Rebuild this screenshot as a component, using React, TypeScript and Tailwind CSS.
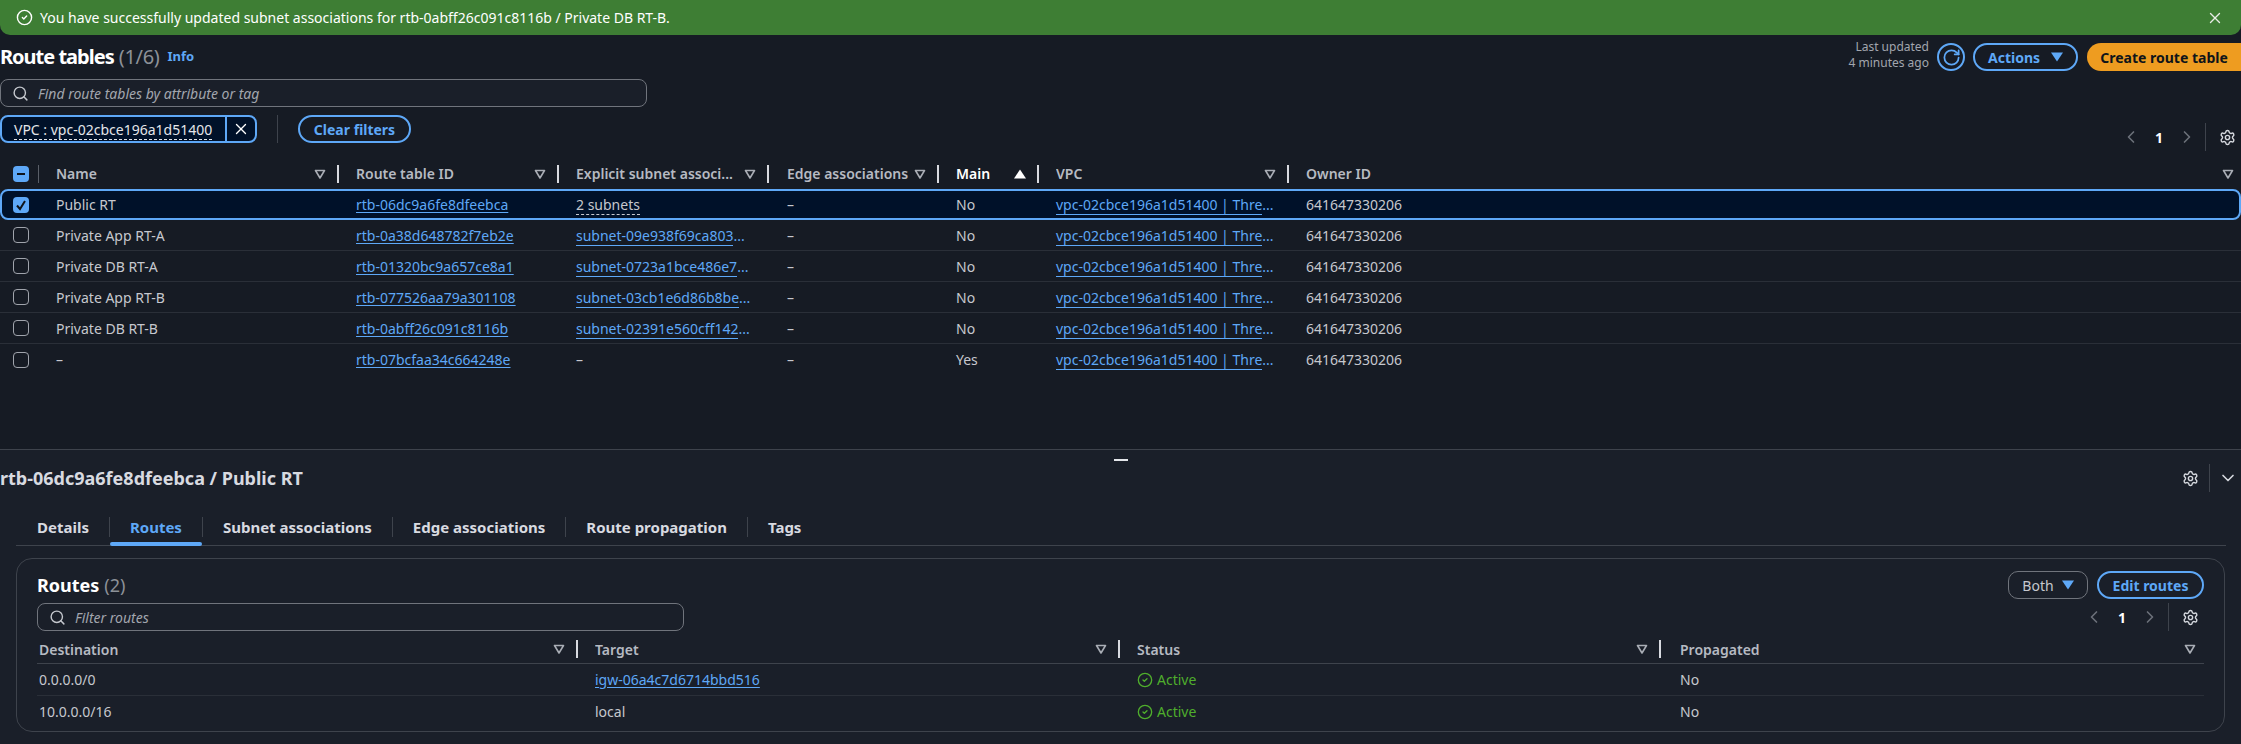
import { ChevronDown, ChevronLeft, ChevronRight, CircleCheck, RotateCw, Search, Settings, X } from "lucide-react";

const font = "[font-family:'Noto_Sans',sans-serif]";

const tableCols = "grid-cols-[39px_301px_220px_210px_170px_100px_250px_1fr]";
const routeCols = "grid-cols-[542px_542px_541px_1fr]";

const routeTables = [
  { name: "Public RT", id: "rtb-06dc9a6fe8dfeebca", subnet: "2 subnets", main: "No", selected: true },
  { name: "Private App RT-A", id: "rtb-0a38d648782f7eb2e", subnet: "subnet-09e938f69ca803", main: "No" },
  { name: "Private DB RT-A", id: "rtb-01320bc9a657ce8a1", subnet: "subnet-0723a1bce486e7", main: "No" },
  { name: "Private App RT-B", id: "rtb-077526aa79a301108", subnet: "subnet-03cb1e6d86b8be", main: "No" },
  { name: "Private DB RT-B", id: "rtb-0abff26c091c8116b", subnet: "subnet-02391e560cff142", main: "No" },
  { name: "–", id: "rtb-07bcfaa34c664248e", subnet: "–", main: "Yes" },
];

const tabs = ["Details", "Routes", "Subnet associations", "Edge associations", "Route propagation", "Tags"];

function FilterIcon() {
  return (
    <svg width="12" height="12" viewBox="0 0 12 12" className="shrink-0">
      <path d="M1.5 2.5h9L6 10z" fill="none" stroke="#a9adb5" strokeWidth="1.6" strokeLinejoin="round" />
    </svg>
  );
}

function Caret({ up, color }: { up?: boolean; color: string }) {
  return (
    <svg width="12" height="10" viewBox="0 0 12 10" className="shrink-0">
      <path d={up ? "M6 0.5 12 9.5H0z" : "M0 0.5h12L6 9.5z"} fill={color} />
    </svg>
  );
}

function HeaderCell({ label, active, tail, pl }: { label: string; active?: boolean; tail?: string; pl: string }) {
  return (
    <div className={`flex h-full items-center ${pl}`}>
      <span className={`flex-1 truncate text-[14px] font-semibold ${active ? "text-white" : "text-[#b6bac2]"}`}>{label}</span>
      {active ? <Caret up color="#ffffff" /> : <FilterIcon />}
      {tail ? <span className={tail} /> : <span className="ml-[11px] mr-px h-[18px] w-[2px] shrink-0 bg-[#d8dae0]" />}
    </div>
  );
}

function Pager() {
  return (
    <div className="flex items-center">
      <ChevronLeft size={20} strokeWidth={2} className="text-[#6b7079]" />
      <span className="mx-[14px] w-[8px] text-center text-[14px] font-bold text-white">1</span>
      <ChevronRight size={20} strokeWidth={2} className="text-[#6b7079]" />
      <span className="ml-[8px] h-[28px] w-px bg-[#3e434c]" />
      <Settings size={17} strokeWidth={2} className="ml-[13px] text-[#d5d8de]" />
    </div>
  );
}

function Checkbox({ state }: { state?: "on" | "some" }) {
  if (state) {
    return (
      <span className="flex h-[16px] w-[16px] items-center justify-center rounded-[4px] bg-[#5ea8f7]">
        <svg width="12" height="12" viewBox="0 0 12 12">
          {state === "on" ? (
            <path d="M2 6.5 5 10l5-8" fill="none" stroke="#0f141a" strokeWidth="2" />
          ) : (
            <path d="M2 6h8" stroke="#0f141a" strokeWidth="2" />
          )}
        </svg>
      </span>
    );
  }
  return <span className="h-[16px] w-[16px] rounded-[4px] border border-[#a0a4ac]" />;
}

function SearchBox({ placeholder, width }: { placeholder: string; width: string }) {
  return (
    <div className={`flex h-[28px] items-center rounded-[8px] border border-[#70747c] bg-[#1a1f29] pl-[11px] ${width}`}>
      <Search size={17} strokeWidth={2} className="text-[#c4c7cd]" />
      <span className="ml-[9px] text-[14px] italic text-[#a2a6ae]">{placeholder}</span>
    </div>
  );
}

function ActiveStatus() {
  return (
    <span className="flex items-center gap-[4px] text-[14px] text-[#4fae2c]">
      <CircleCheck size={16} strokeWidth={2} />
      Active
    </span>
  );
}

export default function App() {
  return (
    <div className={`flex h-[744px] w-[2241px] flex-col overflow-hidden bg-[#161b24] text-[#c6c8ce] ${font}`}>
      <div className="flex h-[35px] shrink-0 items-center rounded-b-[10px] bg-[#3e7e34] pl-[16px] pr-[17px] text-[14px] text-white">
        <CircleCheck size={17} strokeWidth={2} />
        <span className="ml-[7px] flex-1">You have successfully updated subnet associations for rtb-0abff26c091c8116b / Private DB RT-B.</span>
        <X size={18} strokeWidth={1.8} className="text-[#e8ece6]" />
      </div>

      <section className="h-[415px] shrink-0 border-b border-[#3e434c]">
        <div className="flex h-[36px] items-end">
          <div className="flex h-[28px] flex-1 items-center">
            <h1 className="text-[20px] font-bold tracking-[-1px] text-white">Route tables</h1>
            <span className="ml-[5px] text-[20px] tracking-[-0.3px] text-[#8d9198]">(1/6)</span>
            <span className="ml-[8px] text-[13px] font-bold text-[#5ea8f7]">Info</span>
          </div>
          <div className="mr-[8px] text-right text-[12px] leading-[16px] text-[#a2a6ae]">
            <div>Last updated</div>
            <div>4 minutes ago</div>
          </div>
          <button className="flex h-[28px] w-[28px] items-center justify-center rounded-full border-2 border-[#5ea8f7] text-[#5ea8f7]">
            <RotateCw size={19} strokeWidth={2.2} />
          </button>
          <button className="ml-[8px] flex h-[28px] w-[105px] items-center justify-center gap-[11px] rounded-full border-2 border-[#5ea8f7] text-[14px] font-bold text-[#5ea8f7]">
            Actions
            <Caret color="#5ea8f7" />
          </button>
          <button className="ml-[9px] h-[28px] w-[154px] rounded-l-full rounded-r-[14px] bg-[#ee9c20] text-[14px] font-bold text-[#0f141a]">
            Create route table
          </button>
        </div>

        <div className="mt-[8px]">
          <SearchBox placeholder="Find route tables by attribute or tag" width="w-[647px]" />
        </div>

        <div className="flex h-[44px] items-start">
          <div className="mt-[8px] flex h-[28px] w-[257px] items-center rounded-[8px] border-2 border-[#5ea8f7] bg-[#001129]">
            <span className="ml-[12px] flex-1 text-[14px] text-[#e4e6ea]">
              <span className="border-b border-dashed border-[#e4e6ea]">VPC : vpc-02cbce196a1d51400</span>
            </span>
            <span className="flex h-full w-[30px] items-center justify-center border-l-2 border-[#5ea8f7] text-white">
              <X size={18} strokeWidth={1.8} />
            </span>
          </div>
          <span className="ml-[20px] mt-[8px] h-[28px] w-px bg-[#3e434c]" />
          <button className="ml-[20px] mt-[8px] h-[28px] w-[113px] rounded-full border-2 border-[#5ea8f7] text-[14px] font-bold text-[#5ea8f7]">
            Clear filters
          </button>
          <div className="ml-auto mr-[5px] mt-[16px] flex h-[28px] items-center">
            <Pager />
          </div>
        </div>

        <div className={`mt-[7px] grid h-[31px] items-center ${tableCols}`}>
          <div className="flex h-full items-center pl-[13px]">
            <Checkbox state="some" />
            <span className="ml-[9px] h-[18px] w-px bg-[#5a5f68]" />
          </div>
          <HeaderCell label="Name" pl="pl-[17px]" />
          <HeaderCell label="Route table ID" pl="pl-[16px]" />
          <HeaderCell label="Explicit subnet associ..." pl="pl-[16px]" />
          <HeaderCell label="Edge associations" pl="pl-[17px]" />
          <HeaderCell label="Main" active pl="pl-[16px]" />
          <HeaderCell label="VPC" pl="pl-[16px]" />
          <HeaderCell label="Owner ID" tail="w-[7px]" pl="pl-[16px]" />
        </div>

        {routeTables.map((row) => (
          <div
            key={row.id}
            className={`grid h-[31px] items-center text-[14px] ${tableCols} ${
              row.selected ? "rounded-[8px] bg-[#001129] outline-2 -outline-offset-2 outline-[#5ea8f7]" : "border-b border-[#2a2f38] last:border-b-0"
            }`}
          >
            <div className="flex pl-[13px]">
              <Checkbox state={row.selected ? "on" : undefined} />
            </div>
            <div className="pl-[17px]">{row.name}</div>
            <div className="pl-[16px]">
              <a className="text-[#5ea8f7] underline underline-offset-2">{row.id}</a>
            </div>
            <div className="pl-[16px]">
              {row.selected ? (
                <span className="border-b border-dashed border-[#c6c8ce]">{row.subnet}</span>
              ) : row.subnet === "–" ? (
                row.subnet
              ) : (
                <span className="text-[#5ea8f7]">
                  <a className="border-b border-[#5ea8f7]">{row.subnet}</a>...
                </span>
              )}
            </div>
            <div className="pl-[17px]">–</div>
            <div className="pl-[16px]">{row.main}</div>
            <div className="pl-[16px]">
              <span className="text-[#5ea8f7]">
                <a className="border-b border-[#5ea8f7]">vpc-02cbce196a1d51400 | Thre</a>...
              </span>
            </div>
            <div className="pl-[16px]">641647330206</div>
          </div>
        ))}
      </section>

      <section className="flex-1 bg-[#1a1f29]">
        <div className="flex justify-center pt-[9px]">
          <span className="h-[2px] w-[14px] bg-[#e4e6ea]" />
        </div>
        <div className="flex h-[34px] items-center">
          <h2 className="flex-1 text-[18px] font-bold text-[#d8dae0]">rtb-06dc9a6fe8dfeebca / Public RT</h2>
          <Settings size={17} strokeWidth={2} className="text-[#d5d8de]" />
          <span className="ml-[10px] h-[28px] w-px bg-[#3e434c]" />
          <ChevronDown size={20} strokeWidth={2} className="ml-[8px] mr-[3px] text-[#d5d8de]" />
        </div>

        <div className="ml-[16px] mr-[15px] mt-[14px] flex h-[37px] items-center border-b border-[#3e434c] pl-px">
          {tabs.map((tab, i) => (
            <div key={tab} className="flex h-full items-center">
              {i > 0 && <span className="h-[20px] w-px bg-[#3e434c]" />}
              <span
                className={`relative flex h-full items-center px-[20px] text-[15px] font-bold ${
                  tab === "Routes" ? "text-[#5ea8f7]" : "text-[#d8dae0]"
                }`}
              >
                {tab}
                {tab === "Routes" && <span className="absolute inset-x-0 -bottom-px h-[4px] rounded-full bg-[#5ea8f7]" />}
              </span>
            </div>
          ))}
        </div>

        <div className="mx-[16px] mt-[12px] h-[174px] rounded-[16px] border border-[#3e434c] px-[20px]">
          <div className="flex h-[40px] items-start">
            <div className="mt-[12px] flex h-[28px] flex-1 items-center">
              <h3 className="text-[18px] font-bold text-white">Routes</h3>
              <span className="ml-[5px] text-[18px] text-[#8d9198]">(2)</span>
            </div>
            <button className="mt-[12px] flex h-[28px] w-[80px] items-center justify-center gap-[8px] rounded-[10px] border border-[#70747c] text-[14px] text-[#c6c8ce]">
              Both
              <Caret color="#5ea8f7" />
            </button>
            <button className="ml-[9px] mt-[12px] h-[28px] w-[107px] rounded-full border-2 border-[#5ea8f7] text-[14px] font-bold text-[#5ea8f7]">
              Edit routes
            </button>
          </div>
          <div className="mt-[4px] flex items-center">
            <SearchBox placeholder="Filter routes" width="w-[647px]" />
            <div className="ml-auto mr-[5px]">
              <Pager />
            </div>
          </div>
          <div className={`mt-[4px] grid h-[29px] items-center border-b border-[#3e434c] ${routeCols}`}>
            <HeaderCell label="Destination" pl="pl-[2px]" />
            <HeaderCell label="Target" pl="pl-[16px]" />
            <HeaderCell label="Status" pl="pl-[16px]" />
            <HeaderCell label="Propagated" tail="w-[8px]" pl="pl-[18px]" />
          </div>
          <div className={`grid h-[32px] items-center border-b border-[#2a2f38] text-[14px] ${routeCols}`}>
            <div className="pl-[2px]">0.0.0.0/0</div>
            <div className="pl-[16px]">
              <a className="text-[#5ea8f7] underline underline-offset-2">igw-06a4c7d6714bbd516</a>
            </div>
            <div className="pl-[16px]">
              <ActiveStatus />
            </div>
            <div className="pl-[18px]">No</div>
          </div>
          <div className={`grid h-[31px] items-center text-[14px] ${routeCols}`}>
            <div className="pl-[2px]">10.0.0.0/16</div>
            <div className="pl-[16px]">local</div>
            <div className="pl-[16px]">
              <ActiveStatus />
            </div>
            <div className="pl-[18px]">No</div>
          </div>
        </div>
      </section>
    </div>
  );
}
